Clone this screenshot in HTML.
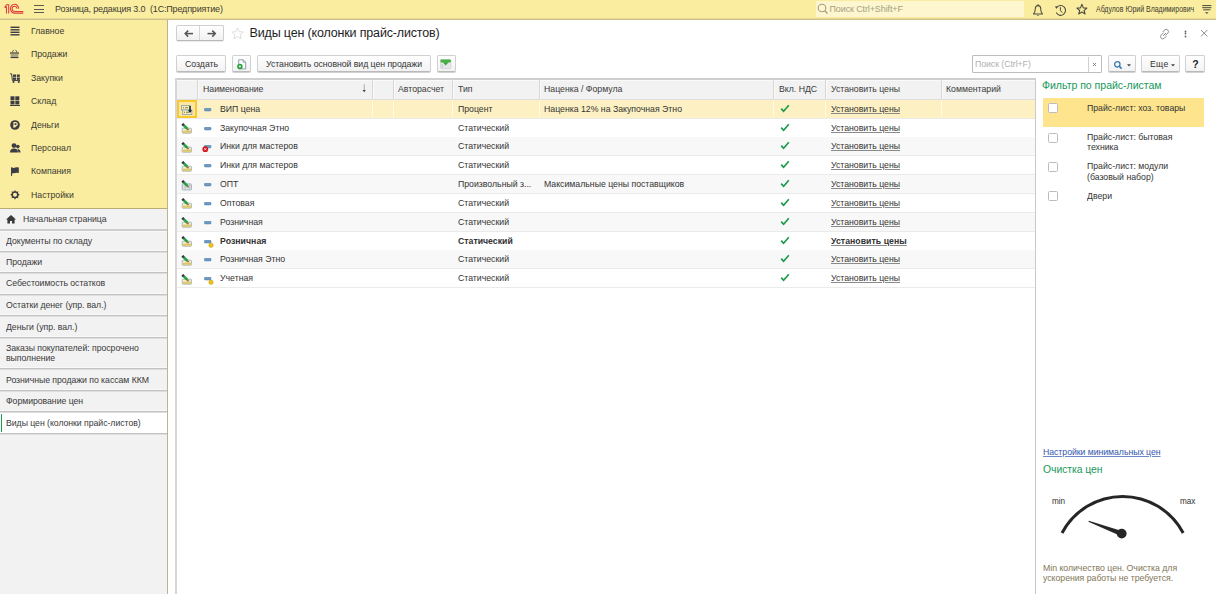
<!DOCTYPE html>
<html><head><meta charset="utf-8">
<style>
*{box-sizing:border-box;margin:0;padding:0}
html,body{width:1216px;height:594px;overflow:hidden;background:#fff;font-family:"Liberation Sans",sans-serif;color:#333}
.t{position:absolute;white-space:nowrap}
.r{position:absolute;display:block}
.u{text-decoration:underline;text-underline-offset:0.5px;text-decoration-color:#8a8a8a;text-decoration-thickness:1px}
</style></head><body>
<div class="r" style="left:0px;top:0px;width:1216px;height:18px;background:#fbed9f;"></div>
<div class="r" style="left:0px;top:18px;width:1216px;height:1px;background:#e6d995;"></div>
<div class="r" style="left:0px;top:19px;width:1216px;height:1px;background:#cdc088;"></div>
<svg class="r" style="left:0px;top:0px;" width="26" height="18" viewBox="0 0 26 18"><g fill="none" stroke="#e03a3c" stroke-width="1.05">
<path d="M4.7 7.6 L6.5 4.7 H8.7 V13.6 M6.5 13.6 V7.2 L4.7 7.6"/>
<path d="M18.7 8.8 A4.1 4.4 0 1 0 14.9 13.1 H23.3"/>
<path d="M17.1 8.6 A2.5 2.6 0 1 0 14.9 11.4 H23.3"/>
</g></svg>
<div class="r" style="left:34px;top:5px;width:9.5px;height:1.3px;background:#5a5a50;"></div>
<div class="r" style="left:34px;top:8.5px;width:9.5px;height:1.3px;background:#5a5a50;"></div>
<div class="r" style="left:34px;top:12px;width:9.5px;height:1.3px;background:#5a5a50;"></div>
<div class="t " style="left:55px;top:3px;font-size:9px;line-height:12.6px;color:#3c3c32;letter-spacing:-0.17px;font-weight:normal;">Розница, редакция 3.0&nbsp; (1С:Предприятие)</div>
<div class="r" style="left:816px;top:1px;width:208px;height:15.5px;background:#fdf6cf;"></div>
<svg class="r" style="left:817px;top:3px;" width="12" height="12" viewBox="0 0 12 12"><circle cx="5" cy="5" r="3.8" fill="none" stroke="#a29c80" stroke-width="1.1"/><path d="M7.8 7.8 L10.5 10.5" stroke="#a29c80" stroke-width="1.3"/></svg>
<div class="t " style="left:829.5px;top:3px;font-size:9px;line-height:12.6px;color:#a5a083;letter-spacing:-0.12px;font-weight:normal;">Поиск Ctrl+Shift+F</div>
<svg class="r" style="left:1032px;top:3px;" width="12" height="13" viewBox="0 0 12 13"><path d="M1.5 11 Q3.2 9.5 3.2 6.5 Q3.2 2.6 6 2.6 Q8.8 2.6 8.8 6.5 Q8.8 9.5 10.5 11 Z" fill="none" stroke="#4a4a40" stroke-width="1.05" stroke-linejoin="round"/><path d="M6 1.2 V2.6" stroke="#4a4a40" stroke-width="1"/><path d="M4.6 12 Q6 13.6 7.4 12 Z" fill="#4a4a40"/></svg>
<svg class="r" style="left:1054px;top:3px;" width="13" height="13" viewBox="0 0 13 13"><path d="M2.6 4.6 A4.9 4.9 0 1 1 2.2 9.6" fill="none" stroke="#4a4a40" stroke-width="1.05"/><path d="M0.8 3.6 L3.4 3.2 L2.8 6 Z" fill="#4a4a40"/><path d="M6.4 4.2 V7.4 L8.2 9.6" fill="none" stroke="#4a4a40" stroke-width="1"/></svg>
<svg class="r" style="left:1076px;top:3px;" width="12" height="13" viewBox="0 0 12 13"><path d="M5.9 1.3 L7.3 4.9 L10.9 5.1 L8.1 7.5 L9.1 11 L5.9 9 L2.7 11 L3.7 7.5 L0.9 5.1 L4.5 4.9 Z" fill="none" stroke="#4a4a40" stroke-width="1.05" stroke-linejoin="round"/></svg>
<div class="t " style="left:1095.5px;top:4px;font-size:8.3px;line-height:11.62px;color:#3c3c32;letter-spacing:0px;font-weight:normal;transform:scaleX(0.84);transform-origin:0 0;">Абдулов Юрий Владимирович</div>
<svg class="r" style="left:1202px;top:3px;" width="11" height="13" viewBox="0 0 11 13"><path d="M0.2 2.6 H9.4 M0.2 4.7 H9.4 M1.2 6.8 H8.4" stroke="#4a4a40" stroke-width="1"/><path d="M3 9.2 L4.8 11 L6.6 9.2 Z" fill="#4a4a40"/></svg>
<div class="r" style="left:0px;top:20px;width:167px;height:188px;background:#fbed9f;"></div>
<div class="r" style="left:0px;top:208px;width:167px;height:1px;background:#b7ad79;"></div>
<div class="r" style="left:0px;top:209px;width:167px;height:385px;background:#f2f2f2;"></div>
<div class="r" style="left:167px;top:20px;width:1px;height:574px;background:#bdb48c;"></div>
<div class="t " style="left:31px;top:24px;font-size:9.8px;line-height:13.72px;color:#3a3a33;letter-spacing:0.0px;font-weight:normal;transform:scaleX(0.89);transform-origin:0 0;">Главное</div>
<svg class="r" style="left:10px;top:26.1px;" width="10" height="10" viewBox="0 0 10 10"><rect x="0.5" y="0.6" width="9" height="1.4" fill="#3c3c46"/><rect x="0.5" y="3.1" width="9" height="1.4" fill="#3c3c46"/><rect x="0.5" y="5.6" width="9" height="1.4" fill="#3c3c46"/><rect x="0.5" y="8.1" width="9" height="1.4" fill="#3c3c46"/></svg>
<div class="t " style="left:31px;top:47px;font-size:9.8px;line-height:13.72px;color:#3a3a33;letter-spacing:0.0px;font-weight:normal;transform:scaleX(0.89);transform-origin:0 0;">Продажи</div>
<svg class="r" style="left:10px;top:49.46px;" width="10" height="11" viewBox="0 0 10 11"><path d="M2.2 3.4 L3.6 0.9 M7 3.4 L5.6 0.9" fill="none" stroke="#55554a" stroke-width="0.9"/><rect x="0" y="3.4" width="9" height="1.3" fill="#3c3c46"/><rect x="0.6" y="4.7" width="7.8" height="3.6" fill="#aaa582"/><rect x="0.6" y="8" width="7.8" height="1.1" fill="#3c3c46"/></svg>
<div class="t " style="left:31px;top:71px;font-size:9.8px;line-height:13.72px;color:#3a3a33;letter-spacing:0.0px;font-weight:normal;transform:scaleX(0.89);transform-origin:0 0;">Закупки</div>
<svg class="r" style="left:10px;top:72.82px;" width="11" height="10" viewBox="0 0 11 10"><path d="M0 0.8 H1.6 L2.4 7.6 H10" fill="none" stroke="#3c3c46" stroke-width="1"/><rect x="3" y="1.5" width="3" height="2.4" fill="#3c3c46"/><rect x="6.8" y="1.5" width="3" height="2.4" fill="#3c3c46"/><rect x="3" y="4.5" width="3" height="2.4" fill="#3c3c46"/><rect x="6.8" y="4.5" width="3" height="2.4" fill="#3c3c46"/><circle cx="3.5" cy="9" r="1" fill="#3c3c46"/><circle cx="8.8" cy="9" r="1" fill="#3c3c46"/></svg>
<div class="t " style="left:31px;top:94px;font-size:9.8px;line-height:13.72px;color:#3a3a33;letter-spacing:0.0px;font-weight:normal;transform:scaleX(0.89);transform-origin:0 0;">Склад</div>
<svg class="r" style="left:10px;top:96.18px;" width="10" height="10" viewBox="0 0 10 10"><rect x="0.5" y="0.3" width="4" height="3.8" fill="#3c3c46"/><rect x="5.3" y="0.3" width="4" height="3.8" fill="#3c3c46"/><rect x="0.5" y="4.7" width="4" height="3.8" fill="#3c3c46"/><rect x="5.3" y="4.7" width="4" height="3.8" fill="#3c3c46"/><rect x="0" y="9" width="10" height="1" fill="#3c3c46"/></svg>
<div class="t " style="left:31px;top:118px;font-size:9.8px;line-height:13.72px;color:#3a3a33;letter-spacing:0.0px;font-weight:normal;transform:scaleX(0.89);transform-origin:0 0;">Деньги</div>
<svg class="r" style="left:10px;top:119.53999999999999px;" width="10" height="10" viewBox="0 0 10 10"><circle cx="5" cy="5" r="4.8" fill="#3c3c46"/><path d="M4 7.8 V2.6 H5.6 Q7.2 2.6 7.2 4.1 Q7.2 5.6 5.6 5.6 H3.3 M3.3 6.7 H5.8" fill="none" stroke="#fbed9f" stroke-width="1.1"/></svg>
<div class="t " style="left:31px;top:141px;font-size:9.8px;line-height:13.72px;color:#3a3a33;letter-spacing:0.0px;font-weight:normal;transform:scaleX(0.89);transform-origin:0 0;">Персонал</div>
<svg class="r" style="left:10px;top:142.9px;" width="11" height="10" viewBox="0 0 11 10"><circle cx="4" cy="2.6" r="2.4" fill="#3c3c46"/><path d="M0 9.5 Q0 5.5 4 5.5 Q8 5.5 8 9.5 Z" fill="#3c3c46"/><circle cx="7.8" cy="3.6" r="1.8" fill="#3c3c46"/><path d="M7.5 6 Q10.5 6 10.5 9.5 H8.5" fill="#3c3c46"/></svg>
<div class="t " style="left:31px;top:164px;font-size:9.8px;line-height:13.72px;color:#3a3a33;letter-spacing:0.0px;font-weight:normal;transform:scaleX(0.89);transform-origin:0 0;">Компания</div>
<svg class="r" style="left:10px;top:167.26px;" width="10" height="10" viewBox="0 0 10 10"><rect x="1" y="0.3" width="1.1" height="8.6" fill="#3c3c46"/><path d="M2 0.6 Q3.5 1.2 5.2 0.6 Q6.8 0 8.8 0.5 V6 Q6.8 5.4 5.2 6 Q3.5 6.6 2 6.2 Z" fill="#3c3c46"/></svg>
<div class="t " style="left:31px;top:188px;font-size:9.8px;line-height:13.72px;color:#3a3a33;letter-spacing:0.0px;font-weight:normal;transform:scaleX(0.89);transform-origin:0 0;">Настройки</div>
<svg class="r" style="left:10px;top:190.11999999999998px;" width="10" height="10" viewBox="0 0 10 10"><g transform="translate(5,4.8)"><circle r="2.8" fill="none" stroke="#3c3c46" stroke-width="1.5"/><path d="M-1 -3 L0 -4.9 L1 -3 Z" fill="#3c3c46" transform="rotate(0)"/><path d="M-1 -3 L0 -4.9 L1 -3 Z" fill="#3c3c46" transform="rotate(45)"/><path d="M-1 -3 L0 -4.9 L1 -3 Z" fill="#3c3c46" transform="rotate(90)"/><path d="M-1 -3 L0 -4.9 L1 -3 Z" fill="#3c3c46" transform="rotate(135)"/><path d="M-1 -3 L0 -4.9 L1 -3 Z" fill="#3c3c46" transform="rotate(180)"/><path d="M-1 -3 L0 -4.9 L1 -3 Z" fill="#3c3c46" transform="rotate(225)"/><path d="M-1 -3 L0 -4.9 L1 -3 Z" fill="#3c3c46" transform="rotate(270)"/><path d="M-1 -3 L0 -4.9 L1 -3 Z" fill="#3c3c46" transform="rotate(315)"/></g></svg>
<div class="r" style="left:0px;top:229px;width:167px;height:2px;background:#cdcdcd;"></div>
<div class="r" style="left:0px;top:231px;width:167px;height:1px;background:#f8f8f8;"></div>
<div class="r" style="left:0px;top:250px;width:167px;height:1px;background:#f9f9f9;"></div>
<div class="r" style="left:0px;top:251px;width:167px;height:1px;background:#c3c3c3;"></div>
<div class="r" style="left:0px;top:252px;width:167px;height:1px;background:#dedede;"></div>
<div class="r" style="left:0px;top:271px;width:167px;height:1px;background:#f9f9f9;"></div>
<div class="r" style="left:0px;top:272px;width:167px;height:1px;background:#c3c3c3;"></div>
<div class="r" style="left:0px;top:273px;width:167px;height:1px;background:#dedede;"></div>
<div class="r" style="left:0px;top:293px;width:167px;height:1px;background:#f9f9f9;"></div>
<div class="r" style="left:0px;top:294px;width:167px;height:1px;background:#c3c3c3;"></div>
<div class="r" style="left:0px;top:295px;width:167px;height:1px;background:#dedede;"></div>
<div class="r" style="left:0px;top:314px;width:167px;height:1px;background:#f9f9f9;"></div>
<div class="r" style="left:0px;top:315px;width:167px;height:1px;background:#c3c3c3;"></div>
<div class="r" style="left:0px;top:316px;width:167px;height:1px;background:#dedede;"></div>
<div class="r" style="left:0px;top:336px;width:167px;height:1px;background:#f9f9f9;"></div>
<div class="r" style="left:0px;top:337px;width:167px;height:1px;background:#c3c3c3;"></div>
<div class="r" style="left:0px;top:338px;width:167px;height:1px;background:#dedede;"></div>
<div class="r" style="left:0px;top:367px;width:167px;height:1px;background:#f9f9f9;"></div>
<div class="r" style="left:0px;top:368px;width:167px;height:1px;background:#c3c3c3;"></div>
<div class="r" style="left:0px;top:369px;width:167px;height:1px;background:#dedede;"></div>
<div class="r" style="left:0px;top:389px;width:167px;height:1px;background:#f9f9f9;"></div>
<div class="r" style="left:0px;top:390px;width:167px;height:1px;background:#c3c3c3;"></div>
<div class="r" style="left:0px;top:391px;width:167px;height:1px;background:#dedede;"></div>
<div class="r" style="left:0px;top:410px;width:167px;height:1px;background:#f9f9f9;"></div>
<div class="r" style="left:0px;top:411px;width:167px;height:1px;background:#c3c3c3;"></div>
<div class="r" style="left:0px;top:412px;width:167px;height:1px;background:#dedede;"></div>
<div class="r" style="left:0px;top:432px;width:167px;height:1px;background:#f9f9f9;"></div>
<div class="r" style="left:0px;top:433px;width:167px;height:1px;background:#c3c3c3;"></div>
<div class="r" style="left:0px;top:434px;width:167px;height:1px;background:#dedede;"></div>
<div class="r" style="left:0px;top:413px;width:167px;height:20px;background:#ffffff;"></div>
<div class="r" style="left:0.6px;top:414px;width:1.8px;height:18px;background:#1ba04f;"></div>
<svg class="r" style="left:6px;top:215px;" width="10" height="9" viewBox="0 0 10 9"><path d="M0 4.5 L5 0 L10 4.5 L8.6 4.5 L8.6 8.5 L6 8.5 L6 6 L4 6 L4 8.5 L1.4 8.5 L1.4 4.5 Z" fill="#3a3a3a"/></svg>
<div class="t " style="left:23px;top:212px;font-size:9.8px;line-height:13.72px;color:#3a3a3a;letter-spacing:-0.04999999999999999px;font-weight:normal;transform:scaleX(0.89);transform-origin:0 0;">Начальная страница</div>
<div class="t " style="left:6px;top:234px;font-size:9.8px;line-height:13.72px;color:#3a3a3a;letter-spacing:-0.04999999999999999px;font-weight:normal;transform:scaleX(0.89);transform-origin:0 0;">Документы по складу</div>
<div class="t " style="left:6px;top:255px;font-size:9.8px;line-height:13.72px;color:#3a3a3a;letter-spacing:-0.04999999999999999px;font-weight:normal;transform:scaleX(0.89);transform-origin:0 0;">Продажи</div>
<div class="t " style="left:6px;top:276px;font-size:9.8px;line-height:13.72px;color:#3a3a3a;letter-spacing:-0.04999999999999999px;font-weight:normal;transform:scaleX(0.89);transform-origin:0 0;">Себестоимость остатков</div>
<div class="t " style="left:6px;top:298px;font-size:9.8px;line-height:13.72px;color:#3a3a3a;letter-spacing:-0.04999999999999999px;font-weight:normal;transform:scaleX(0.89);transform-origin:0 0;">Остатки денег (упр. вал.)</div>
<div class="t " style="left:6px;top:320px;font-size:9.8px;line-height:13.72px;color:#3a3a3a;letter-spacing:-0.04999999999999999px;font-weight:normal;transform:scaleX(0.89);transform-origin:0 0;">Деньги (упр. вал.)</div>
<div class="t " style="left:6px;top:341px;font-size:9.8px;line-height:13.72px;color:#3a3a3a;letter-spacing:-0.04999999999999999px;font-weight:normal;transform:scaleX(0.89);transform-origin:0 0;">Заказы покупателей: просрочено</div>
<div class="t " style="left:6px;top:351px;font-size:9.8px;line-height:13.72px;color:#3a3a3a;letter-spacing:-0.04999999999999999px;font-weight:normal;transform:scaleX(0.89);transform-origin:0 0;">выполнение</div>
<div class="t " style="left:6px;top:373px;font-size:9.8px;line-height:13.72px;color:#3a3a3a;letter-spacing:-0.04999999999999999px;font-weight:normal;transform:scaleX(0.89);transform-origin:0 0;">Розничные продажи по кассам ККМ</div>
<div class="t " style="left:6px;top:394px;font-size:9.8px;line-height:13.72px;color:#3a3a3a;letter-spacing:-0.04999999999999999px;font-weight:normal;transform:scaleX(0.89);transform-origin:0 0;">Формирование цен</div>
<div class="t " style="left:6px;top:416px;font-size:9.8px;line-height:13.72px;color:#3a3a3a;letter-spacing:-0.04999999999999999px;font-weight:normal;transform:scaleX(0.89);transform-origin:0 0;">Виды цен (колонки прайс-листов)</div>
<div class="r" style="left:176px;top:25px;width:48px;height:16px;border:1px solid #cfcfcf;border-bottom-color:#b8b8b8;border-radius:2px;background:linear-gradient(#fff,#f1f1f1);box-shadow:0 1px 0 rgba(0,0,0,0.08)"></div>
<div class="r" style="left:199px;top:26px;width:1px;height:14px;background:#d6d6d6;"></div>
<svg class="r" style="left:184px;top:30px;" width="10" height="8" viewBox="0 0 10 8"><path d="M1.5 3.6 H9" stroke="#555" stroke-width="1.5"/><path d="M4.2 0.6 L1.2 3.6 L4.2 6.6" fill="none" stroke="#555" stroke-width="1.5"/></svg>
<svg class="r" style="left:206.5px;top:30px;" width="10" height="8" viewBox="0 0 10 8"><path d="M0.5 3.6 H8" stroke="#555" stroke-width="1.5"/><path d="M5.3 0.6 L8.3 3.6 L5.3 6.6" fill="none" stroke="#555" stroke-width="1.5"/></svg>
<svg class="r" style="left:231px;top:27px;" width="13" height="13" viewBox="0 0 13 13"><path d="M6.5 0.8 L8.2 4.7 L12.3 5 L9.2 7.7 L10.1 11.8 L6.5 9.6 L2.9 11.8 L3.8 7.7 L0.7 5 L4.8 4.7 Z" fill="none" stroke="#dedede" stroke-width="1"/></svg>
<div class="t " style="left:249.5px;top:25px;font-size:12.5px;line-height:17.5px;color:#1e1e1e;letter-spacing:-0.16px;font-weight:normal;">Виды цен (колонки прайс-листов)</div>
<svg class="r" style="left:1159px;top:27px;" width="12" height="13" viewBox="0 0 12 13"><g fill="none" stroke="#8e8e8e" stroke-width="1"><path d="M4.6 5.6 L2.2 8 Q0.6 9.6 2.2 11.2 Q3.8 12.8 5.4 11.2 L7.4 9.2"/><path d="M6.4 8.6 L8.8 6.2 Q10.4 4.6 8.8 3 Q7.2 1.4 5.6 3 L3.6 5"/><path d="M4.2 8.8 L7 6"/></g></svg>
<svg class="r" style="left:1183.5px;top:29.5px;" width="3" height="3" viewBox="0 0 3 3"><circle cx="1.5" cy="1.5" r="0.9" fill="#666"/></svg>
<svg class="r" style="left:1183.5px;top:32.2px;" width="3" height="3" viewBox="0 0 3 3"><circle cx="1.5" cy="1.5" r="0.9" fill="#666"/></svg>
<svg class="r" style="left:1183.5px;top:34.9px;" width="3" height="3" viewBox="0 0 3 3"><circle cx="1.5" cy="1.5" r="0.9" fill="#666"/></svg>
<svg class="r" style="left:1200px;top:29px;" width="9" height="9" viewBox="0 0 9 9"><path d="M1 1 L7.4 7.4 M7.4 1 L1 7.4" stroke="#8a8a8a" stroke-width="1"/></svg>
<div class="r" style="left:176px;top:55px;width:50px;height:17px;border:1px solid #d0d0d0;border-bottom-color:#b9b9b9;border-radius:2px;background:linear-gradient(#ffffff,#f2f2f2);box-shadow:0 1px 0 #d2d2d2"></div>
<div class="t " style="left:184.5px;top:57px;font-size:9.8px;line-height:13.72px;color:#333;letter-spacing:0.0px;font-weight:normal;transform:scaleX(0.89);transform-origin:0 0;">Создать</div>
<div class="r" style="left:232px;top:55px;width:19px;height:17px;border:1px solid #d0d0d0;border-bottom-color:#b9b9b9;border-radius:2px;background:linear-gradient(#ffffff,#f2f2f2);box-shadow:0 1px 0 #d2d2d2"></div>
<svg class="r" style="left:237px;top:59px;" width="11" height="11" viewBox="0 0 11 11"><path d="M1.7 0.8 H6.2 L8.7 3.3 V9.9 H1.7 Z" fill="#fbfcfd" stroke="#8596a6" stroke-width="0.9"/><path d="M6.2 0.8 V3.3 H8.7" fill="none" stroke="#8596a6" stroke-width="0.8"/><circle cx="2.9" cy="7.4" r="2.75" fill="#25a03a"/><path d="M1.7 7.4 H4.1 M2.9 6.2 V8.6" stroke="#e8f8e8" stroke-width="0.9"/></svg>
<div class="r" style="left:256.5px;top:55px;width:174px;height:17px;border:1px solid #d0d0d0;border-bottom-color:#b9b9b9;border-radius:2px;background:linear-gradient(#ffffff,#f2f2f2);box-shadow:0 1px 0 #d2d2d2"></div>
<div class="t " style="left:265.5px;top:57px;font-size:9.8px;line-height:13.72px;color:#333;letter-spacing:-0.04999999999999999px;font-weight:normal;transform:scaleX(0.89);transform-origin:0 0;">Установить основной вид цен продажи</div>
<div class="r" style="left:436.5px;top:55px;width:19px;height:17px;border:1px solid #d0d0d0;border-bottom-color:#b9b9b9;border-radius:2px;background:linear-gradient(#ffffff,#f2f2f2);box-shadow:0 1px 0 #d2d2d2"></div>
<svg class="r" style="left:440px;top:59px;" width="12" height="11" viewBox="0 0 12 11"><rect x="0.5" y="0.6" width="10.4" height="9" rx="1" fill="#e6e6ea" stroke="#c9c9cf" stroke-width="0.6"/><rect x="0.5" y="0.6" width="10.4" height="2.8" rx="1" fill="#46b043"/><path d="M2.8 3.2 L8.6 3.2 L5.7 6.6 Z" fill="#3aa43a"/><path d="M1.8 6 H3 M1.8 8 H3" stroke="#8aa0c0" stroke-width="0.6"/></svg>
<div class="r" style="left:972px;top:55px;width:130px;height:17.5px;border:1px solid #bdbdbd;background:#fff;border-radius:1px"></div>
<div class="r" style="left:1088px;top:56.5px;width:1px;height:15px;background:#d0d0d0;"></div>
<div class="t " style="left:975px;top:57px;font-size:9.8px;line-height:13.72px;color:#b0b0b0;letter-spacing:-0.04999999999999999px;font-weight:normal;transform:scaleX(0.89);transform-origin:0 0;">Поиск (Ctrl+F)</div>
<svg class="r" style="left:1092px;top:62px;" width="5" height="5" viewBox="0 0 5 5"><path d="M1 1 L4 4 M4 1 L1 4" stroke="#777" stroke-width="0.9"/></svg>
<div class="r" style="left:1108px;top:55px;width:27.5px;height:17px;border:1px solid #d0d0d0;border-bottom-color:#b9b9b9;border-radius:2px;background:linear-gradient(#ffffff,#f2f2f2);box-shadow:0 1px 0 #d2d2d2"></div>
<svg class="r" style="left:1113px;top:60px;" width="10" height="10" viewBox="0 0 10 10"><circle cx="4.3" cy="4.3" r="2.7" fill="none" stroke="#3478b4" stroke-width="1.25"/><path d="M6.3 6.3 L8.6 8.6" stroke="#3478b4" stroke-width="1.6"/></svg>
<svg class="r" style="left:1127px;top:64px;" width="4" height="3" viewBox="0 0 4 3"><path d="M0 0.3 H4 L2 2.4 Z" fill="#444"/></svg>
<div class="r" style="left:1141px;top:55px;width:39px;height:17px;border:1px solid #d0d0d0;border-bottom-color:#b9b9b9;border-radius:2px;background:linear-gradient(#ffffff,#f2f2f2);box-shadow:0 1px 0 #d2d2d2"></div>
<div class="t " style="left:1149.5px;top:57px;font-size:9.8px;line-height:13.72px;color:#333;letter-spacing:0.30000000000000004px;font-weight:normal;transform:scaleX(0.89);transform-origin:0 0;">Еще</div>
<svg class="r" style="left:1171px;top:64px;" width="4" height="3" viewBox="0 0 4 3"><path d="M0 0.3 H4 L2 2.4 Z" fill="#444"/></svg>
<div class="r" style="left:1185px;top:55px;width:20px;height:17px;border:1px solid #d0d0d0;border-bottom-color:#b9b9b9;border-radius:2px;background:linear-gradient(#ffffff,#f2f2f2);box-shadow:0 1px 0 #d2d2d2"></div>
<div class="t " style="left:1192.3px;top:57px;font-size:10.5px;line-height:14.7px;color:#222;letter-spacing:0px;font-weight:bold;">?</div>
<div class="r" style="left:176px;top:78px;width:860px;height:516px;background:#ffffff;"></div>
<div class="r" style="left:175px;top:78px;width:861px;height:2px;background:#cfcfcf;"></div>
<div class="r" style="left:175px;top:78px;width:2px;height:516px;background:#d6d6d6;"></div>
<div class="r" style="left:1035px;top:78px;width:1px;height:516px;background:#c9c9c9;"></div>
<div class="r" style="left:177px;top:80px;width:858px;height:19.5px;background:#f2f2f2;"></div>
<div class="r" style="left:177px;top:80px;width:858px;height:1px;background:#fafafa;"></div>
<div class="r" style="left:177px;top:99px;width:858px;height:1px;background:#dedede;"></div>
<div class="r" style="left:197.3px;top:80px;width:1px;height:19px;background:#d6d6d6;"></div>
<div class="r" style="left:198.3px;top:81px;width:1px;height:18px;background:#fbfbfb;"></div>
<div class="r" style="left:371.7px;top:80px;width:1px;height:19px;background:#d6d6d6;"></div>
<div class="r" style="left:372.7px;top:81px;width:1px;height:18px;background:#fbfbfb;"></div>
<div class="r" style="left:392.5px;top:80px;width:1px;height:19px;background:#d6d6d6;"></div>
<div class="r" style="left:393.5px;top:81px;width:1px;height:18px;background:#fbfbfb;"></div>
<div class="r" style="left:452.2px;top:80px;width:1px;height:19px;background:#d6d6d6;"></div>
<div class="r" style="left:453.2px;top:81px;width:1px;height:18px;background:#fbfbfb;"></div>
<div class="r" style="left:538.7px;top:80px;width:1px;height:19px;background:#d6d6d6;"></div>
<div class="r" style="left:539.7px;top:81px;width:1px;height:18px;background:#fbfbfb;"></div>
<div class="r" style="left:773.1px;top:80px;width:1px;height:19px;background:#d6d6d6;"></div>
<div class="r" style="left:774.1px;top:81px;width:1px;height:18px;background:#fbfbfb;"></div>
<div class="r" style="left:825.1px;top:80px;width:1px;height:19px;background:#d6d6d6;"></div>
<div class="r" style="left:826.1px;top:81px;width:1px;height:18px;background:#fbfbfb;"></div>
<div class="r" style="left:940.5px;top:80px;width:1px;height:19px;background:#d6d6d6;"></div>
<div class="r" style="left:941.5px;top:81px;width:1px;height:18px;background:#fbfbfb;"></div>
<div class="t " style="left:203px;top:82px;font-size:9.8px;line-height:13.72px;color:#3a3a3a;letter-spacing:0.0px;font-weight:normal;transform:scaleX(0.89);transform-origin:0 0;">Наименование</div>
<svg class="r" style="left:361px;top:84px;" width="6" height="10" viewBox="0 0 6 10"><path d="M3.2 0.2 V6.5" stroke="#b0a8a8" stroke-width="1"/><path d="M1.6 6 L4.8 6 L3.2 8.2 Z" fill="#3a4050"/></svg>
<div class="t " style="left:398px;top:82px;font-size:9.8px;line-height:13.72px;color:#3a3a3a;letter-spacing:0.0px;font-weight:normal;transform:scaleX(0.89);transform-origin:0 0;">Авторасчет</div>
<div class="t " style="left:458px;top:82px;font-size:9.8px;line-height:13.72px;color:#3a3a3a;letter-spacing:0.0px;font-weight:normal;transform:scaleX(0.89);transform-origin:0 0;">Тип</div>
<div class="t " style="left:544px;top:82px;font-size:9.8px;line-height:13.72px;color:#3a3a3a;letter-spacing:0.0px;font-weight:normal;transform:scaleX(0.89);transform-origin:0 0;">Наценка / Формула</div>
<div class="t " style="left:779px;top:82px;font-size:9.8px;line-height:13.72px;color:#3a3a3a;letter-spacing:0.0px;font-weight:normal;transform:scaleX(0.89);transform-origin:0 0;">Вкл. НДС</div>
<div class="t " style="left:831px;top:82px;font-size:9.8px;line-height:13.72px;color:#3a3a3a;letter-spacing:0.0px;font-weight:normal;transform:scaleX(0.89);transform-origin:0 0;">Установить цены</div>
<div class="t " style="left:946px;top:82px;font-size:9.8px;line-height:13.72px;color:#3a3a3a;letter-spacing:0.0px;font-weight:normal;transform:scaleX(0.89);transform-origin:0 0;">Комментарий</div>
<div class="r" style="left:177px;top:99.7px;width:858px;height:18.83px;background:#fdf1c4;"></div>
<div class="r" style="left:371.7px;top:99.7px;width:1px;height:18.83px;background:#fff9e6;"></div>
<div class="r" style="left:392.5px;top:99.7px;width:1px;height:18.83px;background:#fff9e6;"></div>
<div class="r" style="left:452.2px;top:99.7px;width:1px;height:18.83px;background:#fff9e6;"></div>
<div class="r" style="left:538.7px;top:99.7px;width:1px;height:18.83px;background:#fff9e6;"></div>
<div class="r" style="left:773.1px;top:99.7px;width:1px;height:18.83px;background:#fff9e6;"></div>
<div class="r" style="left:825.1px;top:99.7px;width:1px;height:18.83px;background:#fff9e6;"></div>
<div class="r" style="left:940.5px;top:99.7px;width:1px;height:18.83px;background:#fff9e6;"></div>
<div class="r" style="left:177px;top:100.00px;width:20px;height:17.6px;border:2px solid #f9c82c;background:#fbe7a2"></div>
<div class="r" style="left:177px;top:117.73px;width:858px;height:0.8px;background:#ebebeb;"></div>
<div class="t " style="left:220px;top:102px;font-size:9.8px;line-height:13.72px;color:#333;letter-spacing:0.0px;font-weight:normal;transform:scaleX(0.89);transform-origin:0 0;">ВИП цена</div>
<div class="t " style="left:458px;top:102px;font-size:9.8px;line-height:13.72px;color:#333;letter-spacing:0.0px;font-weight:normal;transform:scaleX(0.89);transform-origin:0 0;">Процент</div>
<div class="t " style="left:544px;top:102px;font-size:9.8px;line-height:13.72px;color:#333;letter-spacing:0.0px;font-weight:normal;transform:scaleX(0.89);transform-origin:0 0;">Наценка 12% на Закупочная Этно</div>
<svg class="r" style="left:780px;top:103.8px;" width="10" height="9" viewBox="0 0 10 9"><path d="M1.2 4.6 L3.6 7.3 L8.8 1.2" fill="none" stroke="#1a9a4c" stroke-width="1.65"/></svg>
<div class="t u" style="left:831px;top:102px;font-size:9.8px;line-height:13.72px;color:#333;letter-spacing:0.0px;font-weight:normal;transform:scaleX(0.89);transform-origin:0 0;">Установить цены</div>
<svg class="r" style="left:180.5px;top:105px;" width="12" height="11" viewBox="0 0 12 11"><rect x="0.6" y="0.4" width="8.6" height="4.6" fill="#f6eeb8" stroke="#8a9ca8" stroke-width="0.8"/><rect x="1.7" y="5" width="9.2" height="4.6" fill="#f6eeb8" stroke="#8a9ca8" stroke-width="0.8"/><path d="M2 2.8 H3 M4 2.8 H7 M3 7.3 H4 M5 7.3 H8" stroke="#8a7a3a" stroke-width="1.1"/><path d="M9 1 V6.6" stroke="#14243a" stroke-width="1.5"/><path d="M6.9 5.2 L9 8 L11.1 5.2 Z" fill="#14243a"/></svg>
<svg class="r" style="left:204px;top:107.7px;" width="8" height="4" viewBox="0 0 8 4"><rect x="0.4" y="0.3" width="6.6" height="2.6" rx="0.8" fill="#6e9cc7" stroke="#4f7ca8" stroke-width="0.6"/></svg>
<div class="r" style="left:177px;top:136.56px;width:858px;height:0.8px;background:#ebebeb;"></div>
<div class="t " style="left:220px;top:121px;font-size:9.8px;line-height:13.72px;color:#333;letter-spacing:0.0px;font-weight:normal;transform:scaleX(0.89);transform-origin:0 0;">Закупочная Этно</div>
<div class="t " style="left:458px;top:121px;font-size:9.8px;line-height:13.72px;color:#333;letter-spacing:0.0px;font-weight:normal;transform:scaleX(0.89);transform-origin:0 0;">Статический</div>
<svg class="r" style="left:780px;top:122.63px;" width="10" height="9" viewBox="0 0 10 9"><path d="M1.2 4.6 L3.6 7.3 L8.8 1.2" fill="none" stroke="#1a9a4c" stroke-width="1.65"/></svg>
<div class="t u" style="left:831px;top:121px;font-size:9.8px;line-height:13.72px;color:#333;letter-spacing:0.0px;font-weight:normal;transform:scaleX(0.89);transform-origin:0 0;">Установить цены</div>
<svg class="r" style="left:180.5px;top:123.13px;" width="12" height="12" viewBox="0 0 12 12"><rect x="1.2" y="5.2" width="9.2" height="5" rx="0.6" fill="#f3f0dc" stroke="#9aa8b0" stroke-width="0.8"/><rect x="1.6" y="7.6" width="8.4" height="2.2" fill="#dcc865"/><path d="M2.6 2.1 L6.4 5.9" stroke="#22a23e" stroke-width="2.6"/><path d="M1.3 0.8 L2.8 2.3" stroke="#2e3440" stroke-width="2.6"/><path d="M6.2 5.7 L7.6 7.1" stroke="#b0722e" stroke-width="1.8"/></svg>
<svg class="r" style="left:204px;top:126.53px;" width="8" height="4" viewBox="0 0 8 4"><rect x="0.4" y="0.3" width="6.6" height="2.6" rx="0.8" fill="#6e9cc7" stroke="#4f7ca8" stroke-width="0.6"/></svg>
<div class="r" style="left:177px;top:137.36px;width:858px;height:18.83px;background:#f8f8f8;"></div>
<div class="r" style="left:177px;top:155.39px;width:858px;height:0.8px;background:#ebebeb;"></div>
<div class="t " style="left:220px;top:139px;font-size:9.8px;line-height:13.72px;color:#333;letter-spacing:0.0px;font-weight:normal;transform:scaleX(0.89);transform-origin:0 0;">Инки для мастеров</div>
<div class="t " style="left:458px;top:139px;font-size:9.8px;line-height:13.72px;color:#333;letter-spacing:0.0px;font-weight:normal;transform:scaleX(0.89);transform-origin:0 0;">Статический</div>
<svg class="r" style="left:780px;top:141.45999999999998px;" width="10" height="9" viewBox="0 0 10 9"><path d="M1.2 4.6 L3.6 7.3 L8.8 1.2" fill="none" stroke="#1a9a4c" stroke-width="1.65"/></svg>
<div class="t u" style="left:831px;top:139px;font-size:9.8px;line-height:13.72px;color:#333;letter-spacing:0.0px;font-weight:normal;transform:scaleX(0.89);transform-origin:0 0;">Установить цены</div>
<svg class="r" style="left:180.5px;top:141.95999999999998px;" width="12" height="12" viewBox="0 0 12 12"><rect x="1.2" y="5.2" width="9.2" height="5" rx="0.6" fill="#f3f0dc" stroke="#9aa8b0" stroke-width="0.8"/><rect x="1.6" y="7.6" width="8.4" height="2.2" fill="#dcc865"/><path d="M2.6 2.1 L6.4 5.9" stroke="#22a23e" stroke-width="2.6"/><path d="M1.3 0.8 L2.8 2.3" stroke="#2e3440" stroke-width="2.6"/><path d="M6.2 5.7 L7.6 7.1" stroke="#b0722e" stroke-width="1.8"/></svg>
<svg class="r" style="left:201px;top:145.35999999999999px;" width="11" height="9" viewBox="0 0 11 9"><rect x="3.4" y="0.3" width="6.6" height="2.6" rx="0.8" fill="#6e9cc7" stroke="#4f7ca8" stroke-width="0.6"/><circle cx="4.3" cy="4.2" r="2.9" fill="#d5151c"/><path d="M3.2 3.1 L5.4 5.3 M5.4 3.1 L3.2 5.3" stroke="#fff" stroke-width="0.75"/></svg>
<div class="r" style="left:177px;top:174.21999999999997px;width:858px;height:0.8px;background:#ebebeb;"></div>
<div class="t " style="left:220px;top:158px;font-size:9.8px;line-height:13.72px;color:#333;letter-spacing:0.0px;font-weight:normal;transform:scaleX(0.89);transform-origin:0 0;">Инки для мастеров</div>
<div class="t " style="left:458px;top:158px;font-size:9.8px;line-height:13.72px;color:#333;letter-spacing:0.0px;font-weight:normal;transform:scaleX(0.89);transform-origin:0 0;">Статический</div>
<svg class="r" style="left:780px;top:160.29px;" width="10" height="9" viewBox="0 0 10 9"><path d="M1.2 4.6 L3.6 7.3 L8.8 1.2" fill="none" stroke="#1a9a4c" stroke-width="1.65"/></svg>
<div class="t u" style="left:831px;top:158px;font-size:9.8px;line-height:13.72px;color:#333;letter-spacing:0.0px;font-weight:normal;transform:scaleX(0.89);transform-origin:0 0;">Установить цены</div>
<svg class="r" style="left:180.5px;top:160.79px;" width="12" height="12" viewBox="0 0 12 12"><rect x="1.2" y="5.2" width="9.2" height="5" rx="0.6" fill="#f3f0dc" stroke="#9aa8b0" stroke-width="0.8"/><rect x="1.6" y="7.6" width="8.4" height="2.2" fill="#dcc865"/><path d="M2.6 2.1 L6.4 5.9" stroke="#22a23e" stroke-width="2.6"/><path d="M1.3 0.8 L2.8 2.3" stroke="#2e3440" stroke-width="2.6"/><path d="M6.2 5.7 L7.6 7.1" stroke="#b0722e" stroke-width="1.8"/></svg>
<svg class="r" style="left:204px;top:164.19px;" width="8" height="4" viewBox="0 0 8 4"><rect x="0.4" y="0.3" width="6.6" height="2.6" rx="0.8" fill="#6e9cc7" stroke="#4f7ca8" stroke-width="0.6"/></svg>
<div class="r" style="left:177px;top:175.01999999999998px;width:858px;height:18.83px;background:#f8f8f8;"></div>
<div class="r" style="left:177px;top:193.04999999999995px;width:858px;height:0.8px;background:#ebebeb;"></div>
<div class="t " style="left:220px;top:177px;font-size:9.8px;line-height:13.72px;color:#333;letter-spacing:0.0px;font-weight:normal;transform:scaleX(0.89);transform-origin:0 0;">ОПТ</div>
<div class="t " style="left:458px;top:177px;font-size:9.8px;line-height:13.72px;color:#333;letter-spacing:0.0px;font-weight:normal;transform:scaleX(0.89);transform-origin:0 0;">Произвольный з...</div>
<div class="t " style="left:544px;top:177px;font-size:9.8px;line-height:13.72px;color:#333;letter-spacing:0.0px;font-weight:normal;transform:scaleX(0.89);transform-origin:0 0;">Максимальные цены поставщиков</div>
<svg class="r" style="left:780px;top:179.12px;" width="10" height="9" viewBox="0 0 10 9"><path d="M1.2 4.6 L3.6 7.3 L8.8 1.2" fill="none" stroke="#1a9a4c" stroke-width="1.65"/></svg>
<div class="t u" style="left:831px;top:177px;font-size:9.8px;line-height:13.72px;color:#333;letter-spacing:0.0px;font-weight:normal;transform:scaleX(0.89);transform-origin:0 0;">Установить цены</div>
<svg class="r" style="left:180.5px;top:179.62px;" width="12" height="12" viewBox="0 0 12 12"><rect x="1.2" y="3.9" width="9.2" height="6" rx="0.6" fill="#f2f5f7" stroke="#8ea0ac" stroke-width="0.8"/><path d="M1.2 5.9 H10.4 M1.2 7.9 H10.4 M4.2 3.9 V9.9 M8.4 3.9 V9.9" stroke="#9fb0bb" stroke-width="0.6"/><path d="M2.6 2.1 L6.4 5.9" stroke="#22a23e" stroke-width="2.6"/><path d="M1.3 0.8 L2.8 2.3" stroke="#2e3440" stroke-width="2.6"/><path d="M6.2 5.7 L7.6 7.1" stroke="#b0722e" stroke-width="1.8"/></svg>
<svg class="r" style="left:204px;top:183.02px;" width="8" height="4" viewBox="0 0 8 4"><rect x="0.4" y="0.3" width="6.6" height="2.6" rx="0.8" fill="#6e9cc7" stroke="#4f7ca8" stroke-width="0.6"/></svg>
<div class="r" style="left:177px;top:211.88px;width:858px;height:0.8px;background:#ebebeb;"></div>
<div class="t " style="left:220px;top:196px;font-size:9.8px;line-height:13.72px;color:#333;letter-spacing:0.0px;font-weight:normal;transform:scaleX(0.89);transform-origin:0 0;">Оптовая</div>
<div class="t " style="left:458px;top:196px;font-size:9.8px;line-height:13.72px;color:#333;letter-spacing:0.0px;font-weight:normal;transform:scaleX(0.89);transform-origin:0 0;">Статический</div>
<svg class="r" style="left:780px;top:197.95px;" width="10" height="9" viewBox="0 0 10 9"><path d="M1.2 4.6 L3.6 7.3 L8.8 1.2" fill="none" stroke="#1a9a4c" stroke-width="1.65"/></svg>
<div class="t u" style="left:831px;top:196px;font-size:9.8px;line-height:13.72px;color:#333;letter-spacing:0.0px;font-weight:normal;transform:scaleX(0.89);transform-origin:0 0;">Установить цены</div>
<svg class="r" style="left:180.5px;top:198.45px;" width="12" height="12" viewBox="0 0 12 12"><rect x="1.2" y="5.2" width="9.2" height="5" rx="0.6" fill="#f3f0dc" stroke="#9aa8b0" stroke-width="0.8"/><rect x="1.6" y="7.6" width="8.4" height="2.2" fill="#dcc865"/><path d="M2.6 2.1 L6.4 5.9" stroke="#22a23e" stroke-width="2.6"/><path d="M1.3 0.8 L2.8 2.3" stroke="#2e3440" stroke-width="2.6"/><path d="M6.2 5.7 L7.6 7.1" stroke="#b0722e" stroke-width="1.8"/></svg>
<svg class="r" style="left:204px;top:201.85px;" width="8" height="4" viewBox="0 0 8 4"><rect x="0.4" y="0.3" width="6.6" height="2.6" rx="0.8" fill="#6e9cc7" stroke="#4f7ca8" stroke-width="0.6"/></svg>
<div class="r" style="left:177px;top:212.68px;width:858px;height:18.83px;background:#f8f8f8;"></div>
<div class="r" style="left:177px;top:230.70999999999998px;width:858px;height:0.8px;background:#ebebeb;"></div>
<div class="t " style="left:220px;top:215px;font-size:9.8px;line-height:13.72px;color:#333;letter-spacing:0.0px;font-weight:normal;transform:scaleX(0.89);transform-origin:0 0;">Розничная</div>
<div class="t " style="left:458px;top:215px;font-size:9.8px;line-height:13.72px;color:#333;letter-spacing:0.0px;font-weight:normal;transform:scaleX(0.89);transform-origin:0 0;">Статический</div>
<svg class="r" style="left:780px;top:216.77999999999997px;" width="10" height="9" viewBox="0 0 10 9"><path d="M1.2 4.6 L3.6 7.3 L8.8 1.2" fill="none" stroke="#1a9a4c" stroke-width="1.65"/></svg>
<div class="t u" style="left:831px;top:215px;font-size:9.8px;line-height:13.72px;color:#333;letter-spacing:0.0px;font-weight:normal;transform:scaleX(0.89);transform-origin:0 0;">Установить цены</div>
<svg class="r" style="left:180.5px;top:217.27999999999997px;" width="12" height="12" viewBox="0 0 12 12"><rect x="1.2" y="5.2" width="9.2" height="5" rx="0.6" fill="#f3f0dc" stroke="#9aa8b0" stroke-width="0.8"/><rect x="1.6" y="7.6" width="8.4" height="2.2" fill="#dcc865"/><path d="M2.6 2.1 L6.4 5.9" stroke="#22a23e" stroke-width="2.6"/><path d="M1.3 0.8 L2.8 2.3" stroke="#2e3440" stroke-width="2.6"/><path d="M6.2 5.7 L7.6 7.1" stroke="#b0722e" stroke-width="1.8"/></svg>
<svg class="r" style="left:204px;top:220.67999999999998px;" width="8" height="4" viewBox="0 0 8 4"><rect x="0.4" y="0.3" width="6.6" height="2.6" rx="0.8" fill="#6e9cc7" stroke="#4f7ca8" stroke-width="0.6"/></svg>
<div class="r" style="left:177px;top:249.53999999999996px;width:858px;height:0.8px;background:#ebebeb;"></div>
<div class="t " style="left:220px;top:234px;font-size:9.8px;line-height:13.72px;color:#333;letter-spacing:0.05000000000000002px;font-weight:bold;transform:scaleX(0.89);transform-origin:0 0;">Розничная</div>
<div class="t " style="left:458px;top:234px;font-size:9.8px;line-height:13.72px;color:#333;letter-spacing:0.0px;font-weight:bold;transform:scaleX(0.89);transform-origin:0 0;">Статический</div>
<svg class="r" style="left:780px;top:235.61px;" width="10" height="9" viewBox="0 0 10 9"><path d="M1.2 4.6 L3.6 7.3 L8.8 1.2" fill="none" stroke="#1a9a4c" stroke-width="1.65"/></svg>
<div class="t u" style="left:831px;top:234px;font-size:9.8px;line-height:13.72px;color:#333;letter-spacing:0.05000000000000002px;font-weight:bold;transform:scaleX(0.89);transform-origin:0 0;">Установить цены</div>
<svg class="r" style="left:180.5px;top:236.11px;" width="12" height="12" viewBox="0 0 12 12"><rect x="1.2" y="5.2" width="9.2" height="5" rx="0.6" fill="#f3f0dc" stroke="#9aa8b0" stroke-width="0.8"/><rect x="1.6" y="7.6" width="8.4" height="2.2" fill="#dcc865"/><path d="M2.6 2.1 L6.4 5.9" stroke="#22a23e" stroke-width="2.6"/><path d="M1.3 0.8 L2.8 2.3" stroke="#2e3440" stroke-width="2.6"/><path d="M6.2 5.7 L7.6 7.1" stroke="#b0722e" stroke-width="1.8"/></svg>
<svg class="r" style="left:204px;top:239.51000000000002px;" width="10" height="9" viewBox="0 0 10 9"><rect x="0.4" y="0.3" width="6.6" height="2.6" rx="0.8" fill="#6e9cc7" stroke="#4f7ca8" stroke-width="0.6"/><circle cx="7" cy="5.3" r="2.2" fill="#efc21e" stroke="#c09a10" stroke-width="0.5"/></svg>
<div class="r" style="left:177px;top:250.33999999999997px;width:858px;height:18.83px;background:#f8f8f8;"></div>
<div class="r" style="left:177px;top:268.36999999999995px;width:858px;height:0.8px;background:#ebebeb;"></div>
<div class="t " style="left:220px;top:252px;font-size:9.8px;line-height:13.72px;color:#333;letter-spacing:0.0px;font-weight:normal;transform:scaleX(0.89);transform-origin:0 0;">Розничная Этно</div>
<div class="t " style="left:458px;top:252px;font-size:9.8px;line-height:13.72px;color:#333;letter-spacing:0.0px;font-weight:normal;transform:scaleX(0.89);transform-origin:0 0;">Статический</div>
<svg class="r" style="left:780px;top:254.44px;" width="10" height="9" viewBox="0 0 10 9"><path d="M1.2 4.6 L3.6 7.3 L8.8 1.2" fill="none" stroke="#1a9a4c" stroke-width="1.65"/></svg>
<div class="t u" style="left:831px;top:252px;font-size:9.8px;line-height:13.72px;color:#333;letter-spacing:0.0px;font-weight:normal;transform:scaleX(0.89);transform-origin:0 0;">Установить цены</div>
<svg class="r" style="left:180.5px;top:254.94px;" width="12" height="12" viewBox="0 0 12 12"><rect x="1.2" y="5.2" width="9.2" height="5" rx="0.6" fill="#f3f0dc" stroke="#9aa8b0" stroke-width="0.8"/><rect x="1.6" y="7.6" width="8.4" height="2.2" fill="#dcc865"/><path d="M2.6 2.1 L6.4 5.9" stroke="#22a23e" stroke-width="2.6"/><path d="M1.3 0.8 L2.8 2.3" stroke="#2e3440" stroke-width="2.6"/><path d="M6.2 5.7 L7.6 7.1" stroke="#b0722e" stroke-width="1.8"/></svg>
<svg class="r" style="left:204px;top:258.34px;" width="8" height="4" viewBox="0 0 8 4"><rect x="0.4" y="0.3" width="6.6" height="2.6" rx="0.8" fill="#6e9cc7" stroke="#4f7ca8" stroke-width="0.6"/></svg>
<div class="r" style="left:177px;top:287.19999999999993px;width:858px;height:0.8px;background:#ebebeb;"></div>
<div class="t " style="left:220px;top:271px;font-size:9.8px;line-height:13.72px;color:#333;letter-spacing:0.0px;font-weight:normal;transform:scaleX(0.89);transform-origin:0 0;">Учетная</div>
<div class="t " style="left:458px;top:271px;font-size:9.8px;line-height:13.72px;color:#333;letter-spacing:0.0px;font-weight:normal;transform:scaleX(0.89);transform-origin:0 0;">Статический</div>
<svg class="r" style="left:780px;top:273.27px;" width="10" height="9" viewBox="0 0 10 9"><path d="M1.2 4.6 L3.6 7.3 L8.8 1.2" fill="none" stroke="#1a9a4c" stroke-width="1.65"/></svg>
<div class="t u" style="left:831px;top:271px;font-size:9.8px;line-height:13.72px;color:#333;letter-spacing:0.0px;font-weight:normal;transform:scaleX(0.89);transform-origin:0 0;">Установить цены</div>
<svg class="r" style="left:180.5px;top:273.77px;" width="12" height="12" viewBox="0 0 12 12"><rect x="1.2" y="5.2" width="9.2" height="5" rx="0.6" fill="#f3f0dc" stroke="#9aa8b0" stroke-width="0.8"/><rect x="1.6" y="7.6" width="8.4" height="2.2" fill="#dcc865"/><path d="M2.6 2.1 L6.4 5.9" stroke="#22a23e" stroke-width="2.6"/><path d="M1.3 0.8 L2.8 2.3" stroke="#2e3440" stroke-width="2.6"/><path d="M6.2 5.7 L7.6 7.1" stroke="#b0722e" stroke-width="1.8"/></svg>
<svg class="r" style="left:204px;top:277.16999999999996px;" width="10" height="9" viewBox="0 0 10 9"><rect x="0.4" y="0.3" width="6.6" height="2.6" rx="0.8" fill="#6e9cc7" stroke="#4f7ca8" stroke-width="0.6"/><circle cx="7" cy="5.3" r="2.2" fill="#efc21e" stroke="#c09a10" stroke-width="0.5"/></svg>
<div class="t " style="left:1042px;top:78px;font-size:10.6px;line-height:14.84px;color:#17995a;letter-spacing:-0.05px;font-weight:normal;">Фильтр по прайс-листам</div>
<div class="r" style="left:1043px;top:98.2px;width:161px;height:29px;background:#fde48d;"></div>
<div class="r" style="left:1048px;top:103.4px;width:10px;height:10px;border:1px solid #bcbcbc;border-radius:1.5px;background:#fff"></div>
<div class="t " style="left:1087px;top:101px;font-size:9.8px;line-height:13.72px;color:#333;letter-spacing:0.0px;font-weight:normal;transform:scaleX(0.89);transform-origin:0 0;">Прайс-лист: хоз. товары</div>
<div class="r" style="left:1048px;top:132.7px;width:10px;height:10px;border:1px solid #bcbcbc;border-radius:1.5px;background:#fff"></div>
<div class="t " style="left:1087px;top:130px;font-size:9.8px;line-height:13.72px;color:#333;letter-spacing:0.0px;font-weight:normal;transform:scaleX(0.89);transform-origin:0 0;">Прайс-лист: бытовая</div>
<div class="t " style="left:1087px;top:140px;font-size:9.8px;line-height:13.72px;color:#333;letter-spacing:0.0px;font-weight:normal;transform:scaleX(0.89);transform-origin:0 0;">техника</div>
<div class="r" style="left:1048px;top:162.0px;width:10px;height:10px;border:1px solid #bcbcbc;border-radius:1.5px;background:#fff"></div>
<div class="t " style="left:1087px;top:159px;font-size:9.8px;line-height:13.72px;color:#333;letter-spacing:0.0px;font-weight:normal;transform:scaleX(0.89);transform-origin:0 0;">Прайс-лист: модули</div>
<div class="t " style="left:1087px;top:170px;font-size:9.8px;line-height:13.72px;color:#333;letter-spacing:0.0px;font-weight:normal;transform:scaleX(0.89);transform-origin:0 0;">(базовый набор)</div>
<div class="r" style="left:1048px;top:191.2px;width:10px;height:10px;border:1px solid #bcbcbc;border-radius:1.5px;background:#fff"></div>
<div class="t " style="left:1087px;top:189px;font-size:9.8px;line-height:13.72px;color:#333;letter-spacing:0.0px;font-weight:normal;transform:scaleX(0.89);transform-origin:0 0;">Двери</div>
<div class="t u" style="left:1043px;top:445px;font-size:9.8px;line-height:13.72px;color:#3356ad;letter-spacing:-0.04999999999999999px;font-weight:normal;transform:scaleX(0.89);transform-origin:0 0;text-decoration-color:#6f88c8">Настройки минимальных цен</div>
<div class="t " style="left:1043px;top:463px;font-size:10.4px;line-height:14.56px;color:#17995a;letter-spacing:-0.05px;font-weight:normal;">Очистка цен</div>
<div class="t " style="left:1052px;top:496px;font-size:8.2px;line-height:11.48px;color:#333;letter-spacing:-0.1px;font-weight:normal;">min</div>
<div class="t " style="left:1180px;top:496px;font-size:8.2px;line-height:11.48px;color:#333;letter-spacing:-0.1px;font-weight:normal;">max</div>
<svg class="r" style="left:1050px;top:485px;" width="150" height="60" viewBox="0 0 150 60"><path d="M12 48 A68.5 68.5 0 0 1 133.2 48" fill="none" stroke="#262626" stroke-width="3"/>
<path d="M38.43 36.77 L70.79 51.04 L72.61 46.16 L38.77 35.83 Z" fill="#262626"/><circle cx="71.7" cy="48.6" r="4.9" fill="#262626"/></svg>
<div class="t " style="left:1042.5px;top:561px;font-size:9.8px;line-height:13.72px;color:#7f7557;letter-spacing:-0.01999999999999999px;font-weight:normal;transform:scaleX(0.89);transform-origin:0 0;">Min количество цен. Очистка для</div>
<div class="t " style="left:1042.5px;top:571px;font-size:9.8px;line-height:13.72px;color:#7f7557;letter-spacing:-0.01999999999999999px;font-weight:normal;transform:scaleX(0.89);transform-origin:0 0;">ускорения работы не требуется.</div>
</body></html>
